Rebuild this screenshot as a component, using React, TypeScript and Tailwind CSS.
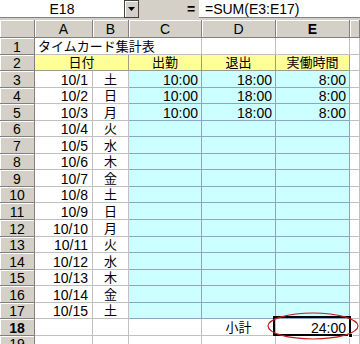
import React from "react";

const GRID = "grid grid-cols-[35px_58px_36px_73px_74px_74px_10px]";
const ROW = "h-[16.55px]";

const days = ["土", "日", "月", "火", "水", "木", "金", "土", "日", "月", "火", "水", "木", "金", "土"];
const worked = [
    { in: "10:00", out: "18:00", total: "8:00" },
    { in: "10:00", out: "18:00", total: "8:00" },
    { in: "10:00", out: "18:00", total: "8:00" },
];

const Head = ({ children, bold }: { children?: React.ReactNode; bold?: boolean }) => (
    <div
        className={`flex items-center justify-center bg-[#d4d0c8] border-r border-b border-[#808080] shadow-[inset_1px_1px_0_#fff] leading-none ${bold ? "font-bold" : ""}`}
    >
        {children}
    </div>
);

const RowHead = ({ n, bold }: { n: number; bold?: boolean }) => (
    <div
        className={`flex items-end justify-center bg-[#d4d0c8] border-r border-b border-[#808080] shadow-[inset_1px_1px_0_#fff] leading-[14px] ${bold ? "font-bold" : ""}`}
    >
        {n}
    </div>
);

const white = "border-r border-b border-[#c0c0c0] bg-white";
const cyan = "border-r border-b border-[#8fa3c2] bg-[#ccffff]";
const yellow = "border-r border-b border-[#9c9c8c] bg-[#ffff99]";

export default function App() {
    return (
        <div className="w-[360px] h-[344px] overflow-hidden bg-white text-black text-[14px] font-[family-name:'Liberation_Sans','Noto_Sans_CJK_JP',sans-serif]">

            {/* Name box + formula bar */}
            <div className="flex h-[20px] bg-[#d4d0c8]">
                <div className="w-[124px] h-[18px] bg-white border-b border-[#808080] flex items-center justify-center leading-none">E18</div>
                <div className="w-[15px] h-[18px] flex items-center justify-center bg-[#d4d0c8] border border-[#404040] shadow-[inset_1px_1px_0_#fff]">
                    <svg width="7" height="4" viewBox="0 0 7 4">
                        <path d="M0 0h7L3.5 4z" fill="#000" />
                    </svg>
                </div>
                <div className="w-[44px]" />
                <div className="w-[16px] h-[18px] flex items-center justify-center font-bold leading-none">=</div>
                <div className="flex-1 h-[18px] bg-white border-b border-[#808080] pl-[6px] flex items-center leading-none">=SUM(E3:E17)</div>
            </div>

            {/* Column headers */}
            <div className={`${GRID} h-[18px]`}>
                <Head />
                <Head>A</Head>
                <Head>B</Head>
                <Head>C</Head>
                <Head>D</Head>
                <Head bold>E</Head>
                <Head />
            </div>

            {/* Row 1 */}
            <div className={`${GRID} ${ROW}`}>
                <RowHead n={1} />
                <div className="col-span-3 border-r border-b border-[#c0c0c0] pl-[3px] flex items-end text-[13px] leading-[14px] whitespace-nowrap">タイムカード集計表</div>
                <div className={white} />
                <div className={white} />
                <div className={white} />
            </div>

            {/* Row 2 */}
            <div className={`${GRID} ${ROW}`}>
                <RowHead n={2} />
                <div className={`col-span-2 ${yellow} flex items-end justify-center text-[13px] leading-[14px]`}>日付</div>
                <div className={`${yellow} flex items-end justify-center text-[13px] leading-[14px]`}>出勤</div>
                <div className={`${yellow} flex items-end justify-center text-[13px] leading-[14px]`}>退出</div>
                <div className={`${yellow} flex items-end justify-center text-[13px] leading-[14px]`}>実働時間</div>
                <div className={white} />
            </div>

            {/* Rows 3-17 */}
            {days.map((d, i) => {
                const w = worked[i];
                return (
                    <div key={i} className={`${GRID} ${ROW}`}>
                        <RowHead n={i + 3} />
                        <div className={`${white} flex items-end justify-end pr-[4px] leading-[14px]`}>10/{i + 1}</div>
                        <div className={`${white} flex items-end justify-center text-[13px] leading-[14px]`}>{d}</div>
                        <div className={`${cyan} flex items-end justify-end pr-[3px] leading-[14px]`}>{w?.in}</div>
                        <div className={`${cyan} flex items-end justify-end pr-[3px] leading-[14px]`}>{w?.out}</div>
                        <div className={`${cyan} flex items-end justify-end pr-[3px] leading-[14px]`}>{w?.total}</div>
                        <div className={white} />
                    </div>
                );
            })}

            {/* Row 18 */}
            <div className={`${GRID} ${ROW}`}>
                <RowHead n={18} bold />
                <div className={white} />
                <div className={white} />
                <div className={white} />
                <div className={`${white} flex items-end justify-center text-[13px] leading-[14px]`}>小計</div>
                <div className={`${white} relative flex items-end justify-end pr-[3px] leading-[14px]`}>
                    24:00
                    <div className="absolute -left-[3px] -top-[3px] -right-[2px] -bottom-[1px] border-2 border-black" />
                    <div className="absolute -right-[4px] -bottom-[3px] w-[5px] h-[5px] bg-black border border-white" />
                    <svg className="absolute -left-[9px] -top-[7px] overflow-visible" width="92" height="28" viewBox="0 0 92 28">
                        <ellipse cx="46" cy="14" rx="45" ry="13" fill="none" stroke="#c41a1a" strokeWidth="1.2" />
                    </svg>
                </div>
                <div className={white} />
            </div>

            {/* Row 19 (partly visible) */}
            <div className={`${GRID} ${ROW}`}>
                <RowHead n={19} />
                <div className={white} />
                <div className={white} />
                <div className={white} />
                <div className={white} />
                <div className={white} />
                <div className={white} />
            </div>

        </div>
    );
}
